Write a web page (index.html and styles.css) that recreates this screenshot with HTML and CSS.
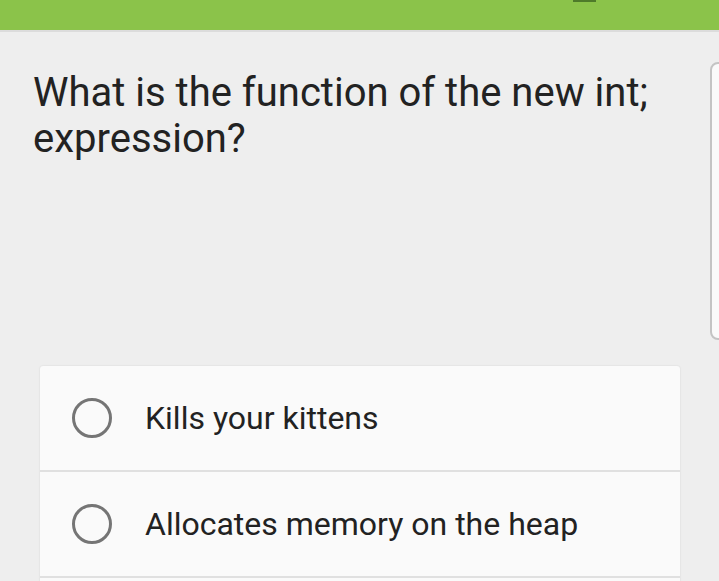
FILE: index.html
```html
<!DOCTYPE html>
<html>
<head>
<meta charset="utf-8">
<link rel="stylesheet" href="styles.css">
</head>
<body>
<div class="topbar"><span class="handle"></span></div>
<div class="main">
  <div class="question">What is the function of the new int; expression?</div>
  <div class="side-card"></div>
  <div class="options">
    <div class="option"><span class="radio"></span><span class="label">Kills your kittens</span></div>
    <div class="option"><span class="radio"></span><span class="label">Allocates memory on the heap</span></div>
    <div class="option"><span class="radio"></span><span class="label"></span></div>
  </div>
</div>
</body>
</html>
```
FILE: styles.css
```css
html, body {
  margin: 0;
  padding: 0;
  width: 719px;
  height: 581px;
  overflow: hidden;
  background: #eeeeee;
  font-family: Roboto, "Noto Sans", sans-serif;
}
.topbar {
  height: 30px;
  background: #8bc34a;
  border-bottom: 2px solid #dcdcdc;
  position: relative;
}
.handle {
  position: absolute;
  left: 573px;
  top: 0;
  width: 23px;
  height: 2px;
  background: #4e7a2a;
}
.main {
  position: relative;
  padding: 38px 0 0 33px;
}
.question {
  font-size: 40px;
  line-height: 46px;
  color: #222222;
  width: 650px;
  height: 250px;
}
.side-card {
  position: absolute;
  left: 710px;
  top: 30px;
  width: 20px;
  height: 274px;
  border: 2px solid #c4c4c4;
  border-radius: 8px;
  background: #fafafa;
}
.options {
  margin: 46px 0 0 7px;
  width: 640px;
  background: #fafafa;
  border-radius: 3px;
  box-shadow: 0 0 2px rgba(0,0,0,0.12);
}
.option {
  height: 104px;
  display: flex;
  align-items: center;
  border-bottom: 2px solid #e0e0e0;
}
.radio {
  width: 40px;
  height: 40px;
  box-sizing: border-box;
  border: 3px solid #757575;
  border-radius: 50%;
  margin-left: 32px;
  flex-shrink: 0;
}
.label {
  margin-left: 33px;
  font-size: 32px;
  color: #222222;
}
```
